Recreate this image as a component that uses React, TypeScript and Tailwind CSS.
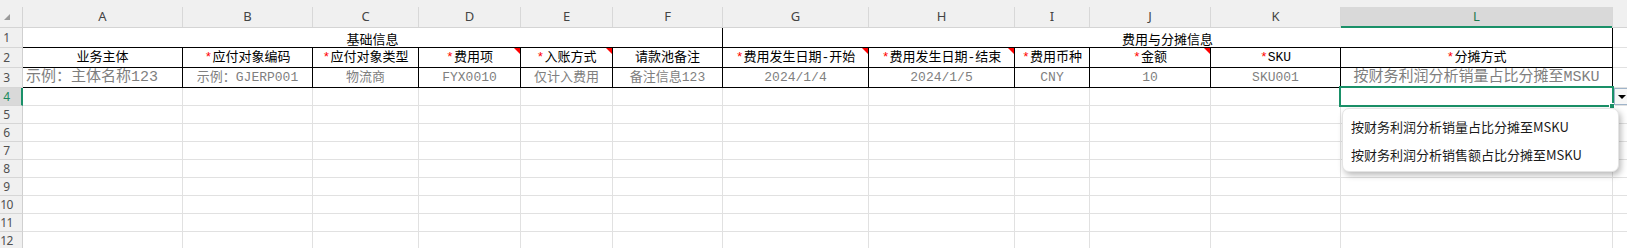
import React from 'react';

type Col = {
  letter: string;
  w: string;
  head: string;
  star?: boolean;
  note?: boolean;
  sample: string;
  sampleCls?: string;
};

const cols: Col[] = [
  { letter: 'A', w: 'w-[160px]', head: '业务主体', sample: '示例：主体名称123', sampleCls: 'justify-start pl-[3px] text-[15px]' },
  { letter: 'B', w: 'w-[130px]', head: '应付对象编码', star: true, sample: '示例：GJERP001' },
  { letter: 'C', w: 'w-[106px]', head: '应付对象类型', star: true, sample: '物流商' },
  { letter: 'D', w: 'w-[102px]', head: '费用项', star: true, note: true, sample: 'FYX0010' },
  { letter: 'E', w: 'w-[92px]', head: '入账方式', star: true, note: true, sample: '仅计入费用' },
  { letter: 'F', w: 'w-[110px]', head: '请款池备注', sample: '备注信息123' },
  { letter: 'G', w: 'w-[146px]', head: '费用发生日期-开始', star: true, note: true, sample: '2024/1/4' },
  { letter: 'H', w: 'w-[146px]', head: '费用发生日期-结束', star: true, note: true, sample: '2024/1/5' },
  { letter: 'I', w: 'w-[75px]', head: '费用币种', star: true, sample: 'CNY' },
  { letter: 'J', w: 'w-[121px]', head: '金额', star: true, note: true, sample: '10' },
  { letter: 'K', w: 'w-[130px]', head: 'SKU', star: true, sample: 'SKU001' },
  { letter: 'L', w: 'w-[272px]', head: '分摊方式', star: true, sample: '按财务利润分析销量占比分摊至MSKU', sampleCls: 'justify-center text-[15px]' },
];

const cellFont = "font-['Liberation_Mono','Noto_Sans_CJK_SC',monospace]";
const cjkFont = "font-['Noto_Sans_CJK_SC','Noto_Sans',sans-serif]";
const uiFont = "font-['Noto_Sans','Noto_Sans_CJK_SC',sans-serif]";

function RowHead({ n, active }: { n: number; active?: boolean }) {
  return (
    <div
      className={`w-[23px] h-full shrink-0 border-b border-[#d6d6d6] flex items-center ${uiFont} text-[12px] leading-none ${
        active ? 'bg-[#d9d9d9] text-[#1a8a5e] border-r-2 border-r-[#1a9068]' : 'bg-[#f0f0f0] text-[#505050] border-r border-r-[#d0d0d0]'
      }`}
    >
      <span className="w-[13px] text-center tracking-[-0.5px]">{n}</span>
    </div>
  );
}

function EmptyRow({ n, active, tall }: { n: number; active?: boolean; tall?: boolean }) {
  return (
    <div className={`flex ${tall ? 'h-[20px]' : 'h-[18px]'}`}>
      <RowHead n={n} active={active} />
      {cols.map((c) => (
        <div key={c.letter} className={`${c.w} shrink-0 h-full border-r border-b border-[#e1e1e1]`} />
      ))}
      <div className="flex-1 h-full border-b border-[#e1e1e1]" />
    </div>
  );
}

export default function App() {
  return (
    <div className="relative w-[1627px] h-[248px] overflow-hidden bg-white">
      {/* column letters */}
      <div className="flex h-[28px] bg-[#f0f0f0] border-b border-[#d4d4d4] items-end">
        <div className="w-[23px] h-[20px] shrink-0 border-r border-[#d4d4d4] flex items-end pl-[4px] pb-[7px]">
          <div className="w-0 h-0 border-l-[6px] border-l-transparent border-b-[6px] border-b-[#9a9a9a]" />
        </div>
        {cols.map((c) => (
          <div
            key={c.letter}
            className={`${c.w} shrink-0 h-[20px] border-r border-[#d8d8d8] relative flex items-center justify-center ${uiFont} text-[13px] ${
              c.letter === 'L' ? 'bg-[#d9d9d9] text-[#1c7a4f]' : 'text-[#444]'
            }`}
          >
            {c.letter}
            {c.letter === 'L' && <div className="absolute left-0 right-0 -bottom-[1px] h-[2px] bg-[#1a9068]" />}
          </div>
        ))}
        <div className="flex-1 h-[20px]" />
      </div>

      {/* row 1: merged group titles */}
      <div className={`flex h-[20px] ${cjkFont} text-[13px] text-black`}>
        <RowHead n={1} />
        <div className="w-[700px] shrink-0 h-full border-r border-b border-black flex items-center justify-center leading-none pt-[1px]">
          基础信息
        </div>
        <div className="w-[890px] shrink-0 h-full border-r border-b border-black flex items-center justify-center leading-none pt-[1px]">
          费用与分摊信息
        </div>
        <div className="flex-1 h-full border-b border-[#e1e1e1]" />
      </div>

      {/* row 2: field headers */}
      <div className={`flex h-[20px] ${cellFont} text-[13px] text-black`}>
        <RowHead n={2} />
        {cols.map((c) => (
          <div
            key={c.letter}
            className={`${c.w} shrink-0 h-full border-r border-b border-black relative flex items-center justify-center leading-none whitespace-nowrap`}
          >
            {c.star && <span className="text-[#ff0000]">*</span>}
            <span>{c.head}</span>
            {c.note && (
              <div className="absolute right-0 top-0 w-0 h-0 border-l-[6px] border-l-transparent border-t-[6px] border-t-[#ff0000]" />
            )}
          </div>
        ))}
        <div className="flex-1 h-full border-b border-[#e1e1e1]" />
      </div>

      {/* row 3: samples */}
      <div className={`flex h-[20px] ${cellFont} text-[13px] text-[#7f7f7f]`}>
        <RowHead n={3} />
        {cols.map((c) => (
          <div
            key={c.letter}
            className={`${c.w} shrink-0 h-full border-r border-b border-black flex items-center leading-none whitespace-nowrap overflow-hidden ${
              c.sampleCls ?? 'justify-center'
            }`}
          >
            {c.sample}
          </div>
        ))}
        <div className="flex-1 h-full border-b border-[#e1e1e1]" />
      </div>

      <EmptyRow n={4} active />
      {[5, 6, 7, 8, 9, 10, 11, 12].map((n) => (
        <EmptyRow key={n} n={n} />
      ))}

      {/* active cell L4 */}
      <div className="absolute left-[1339px] top-[86px] w-[275px] h-[21px] border-2 border-[#1a9068]" />
      <div className="absolute left-[1609px] top-[103px] w-[6px] h-[6px] bg-[#1a9068] border border-white" />

      {/* list validation button */}
      <div className="absolute left-[1614px] top-[88px] w-[16px] h-[17px] bg-[#f7f7f7] border border-[#9fb4ca] flex items-center pl-[3px]">
        <div className="w-0 h-0 border-l-[4px] border-r-[4px] border-t-[4px] border-l-transparent border-r-transparent border-t-black" />
      </div>

      {/* dropdown list */}
      <div
        className={`absolute left-[1342px] top-[108px] w-[277px] h-[64px] rounded-[7px] bg-white border border-[#e4e4e4] shadow-[2px_3px_6px_rgba(0,0,0,0.28)] pt-[4px] ${cjkFont} text-[13px] text-[#1a1a1a]`}
      >
        <div className="h-[28px] flex items-center pl-[8px]">按财务利润分析销量占比分摊至MSKU</div>
        <div className="h-[28px] flex items-center pl-[8px]">按财务利润分析销售额占比分摊至MSKU</div>
      </div>
    </div>
  );
}
